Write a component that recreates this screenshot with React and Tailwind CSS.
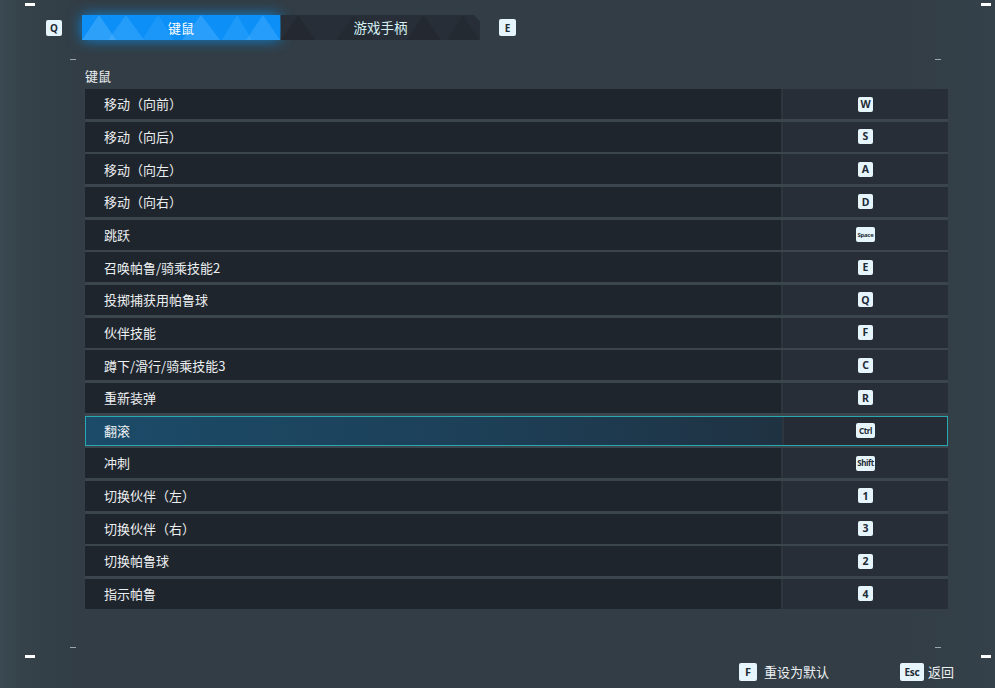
import React from "react";

const rows = [
  ["移动（向前）", "W"],
  ["移动（向后）", "S"],
  ["移动（向左）", "A"],
  ["移动（向右）", "D"],
  ["跳跃", "Space"],
  ["召唤帕鲁/骑乘技能2", "E"],
  ["投掷捕获用帕鲁球", "Q"],
  ["伙伴技能", "F"],
  ["蹲下/滑行/骑乘技能3", "C"],
  ["重新装弹", "R"],
  ["翻滚", "Ctrl"],
  ["冲刺", "Shift"],
  ["切换伙伴（左）", "1"],
  ["切换伙伴（右）", "3"],
  ["切换帕鲁球", "2"],
  ["指示帕鲁", "4"],
];

const CJK = { fontFamily: '"Noto Sans CJK SC", "Noto Sans", sans-serif' };
const KEYF = { fontFamily: '"Noto Sans", "DejaVu Sans", sans-serif' };

function Key({ k }) {
  if (k === "Space") {
    return (
      <div className="w-[19px] h-[15px] rounded-[2px] bg-[#e6f5fb] text-[#1f2b36] flex items-center justify-center text-[6px] font-bold tracking-[-0.3px] leading-none" style={KEYF}>
        Space
      </div>
    );
  }
  if (k === "Ctrl" || k === "Shift") {
    return (
      <div className="w-[19px] h-[15px] rounded-[2px] bg-[#e6f5fb] text-[#1f2b36] flex items-center justify-center text-[8px] font-bold tracking-[-0.4px] leading-none" style={KEYF}>
        {k}
      </div>
    );
  }
  return (
    <div className="w-[15px] h-[15px] rounded-[2px] bg-[#e6f5fb] text-[#1f2b36] flex items-center justify-center text-[10.5px] font-bold leading-none" style={KEYF}>
      {k}
    </div>
  );
}

function TabTriangles({ fill, tris }) {
  return (
    <svg className="absolute inset-0 w-full h-full" viewBox="0 0 198 25" preserveAspectRatio="none">
      {tris.map(([x, w, o], i) => (
        <polygon key={i} points={`${x},25 ${x + w / 2},0 ${x + w},25`} fill={fill} opacity={o} />
      ))}
    </svg>
  );
}

export default function App() {
  return (
    <div
      className="relative w-[995px] h-[688px] overflow-hidden bg-[linear-gradient(90deg,#3a4a52_0px,#35424a_22px,#323d45_80px,#323d45_900px,#35414a_995px)] text-white"
      style={CJK}
    >
      {/* corner marks */}
      <div className="absolute left-[25px] top-[3px] w-[10px] h-[3px] bg-white" />
      <div className="absolute left-[981px] top-[3px] w-[10px] h-[3px] bg-white" />
      <div className="absolute left-[25px] top-[655px] w-[10px] h-[3px] bg-white" />
      <div className="absolute left-[981px] top-[655px] w-[10px] h-[3px] bg-white" />
      <div className="absolute left-[70px] top-[59px] w-[6px] h-[1px] bg-[#9aa7ad]" />
      <div className="absolute left-[935px] top-[59px] w-[6px] h-[1px] bg-[#9aa7ad]" />
      <div className="absolute left-[70px] top-[647px] w-[6px] h-[1px] bg-[#9aa7ad]" />
      <div className="absolute left-[935px] top-[647px] w-[6px] h-[1px] bg-[#9aa7ad]" />

      {/* tab bar */}
      <div className="flex items-center pl-[46px] pt-[15px]">
        <div className="w-[16px] h-[16px] rounded-[2px] bg-[#e6f5fb] text-[#1f2b36] flex items-center justify-center text-[10px] font-bold leading-none" style={KEYF}>
          Q
        </div>
        <div className="ml-[20px] relative w-[198px] h-[25px] bg-[#0c90f8] shadow-[0_0_14px_rgba(0,150,255,0.8)] flex items-center justify-center overflow-hidden">
          <TabTriangles
            fill="#6cc0ff"
            tris={[
              [0, 34, 0.35],
              [26, 36, 0.25],
              [60, 32, 0.15],
              [100, 38, 0.3],
              [140, 30, 0.18],
              [164, 34, 0.28],
            ]}
          />
          <span className="relative text-[13px] leading-none text-white">键鼠</span>
        </div>
        <div className="ml-[1px] relative w-[199px] h-[25px] bg-[#282e37] flex items-center justify-center overflow-hidden [clip-path:polygon(0_0,calc(100%-6px)_0,100%_6px,100%_100%,0_100%)]">
          <TabTriangles
            fill="#1e232a"
            tris={[
              [0, 34, 0.45],
              [55, 36, 0.35],
              [125, 34, 0.45],
              [165, 32, 0.35],
            ]}
          />
          <span className="relative text-[13.5px] leading-none text-[#d3eff4]">游戏手柄</span>
        </div>
        <div className="ml-[19px] w-[17px] h-[17px] rounded-[2px] bg-[#e6f5fb] text-[#1f2b36] flex items-center justify-center text-[10px] font-bold leading-none" style={KEYF}>
          E
        </div>
      </div>

      {/* content */}
      <div className="ml-[85px] w-[863px]">
        <div className="mt-[27px] h-[22px] text-[13px] leading-[18px] text-[#eef1f2]">键鼠</div>
        <div className="flex flex-col gap-[2.67px] bg-[#3a454d]">
          {rows.map(([label, key]) => {
            const sel = label === "翻滚";
            return (
              <div key={label} className={sel ? "flex h-[30px] border border-[#2aa8b0] bg-[#252c35]" : "flex h-[30px] bg-[#272e38]"}>
                <div
                  className={
                    sel
                      ? "w-[696px] flex items-center pl-[18px] bg-[linear-gradient(90deg,#1b4b69,#1d4058_55%,#1f3242)] text-[13px] text-[#f2f4f5]"
                      : "w-[696px] flex items-center pl-[19px] bg-[#1f252c] text-[13px] text-[#eceff1]"
                  }
                >
                  {label}
                </div>
                <div className="w-[2px] bg-[#2d353e]" />
                <div className="flex-1 flex items-center justify-center">
                  <Key k={key} />
                </div>
              </div>
            );
          })}
        </div>
      </div>

      {/* footer */}
      <div className="flex items-center pl-[739px] mt-[54px]">
        <div className="w-[18px] h-[18px] rounded-[2px] bg-[#e6f5fb] text-[#1f2b36] flex items-center justify-center text-[11px] font-bold leading-none" style={KEYF}>
          F
        </div>
        <span className="ml-[7px] text-[13px] leading-none text-[#eceff1]">重设为默认</span>
        <div className="ml-[71px] w-[24px] h-[18px] rounded-[2px] bg-[#e6f5fb] text-[#1f2b36] flex items-center justify-center text-[10px] font-bold leading-none tracking-[-0.3px]" style={KEYF}>
          Esc
        </div>
        <span className="ml-[4px] text-[13px] leading-none text-[#eceff1]">返回</span>
      </div>
    </div>
  );
}
